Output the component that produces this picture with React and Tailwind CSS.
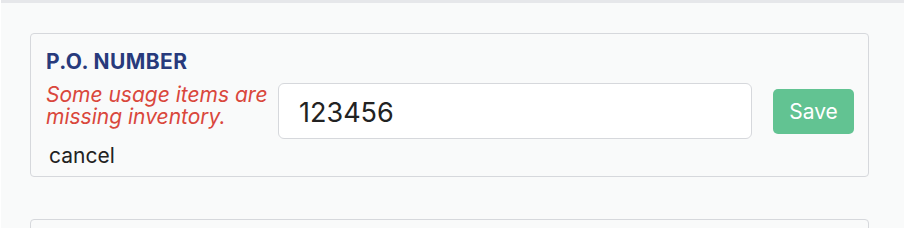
import React, { useState } from 'react';

export default function App() {
  const [po, setPo] = useState('123456');

  return (
    <div className="h-[228px] overflow-hidden bg-[#f9fafa] border-l border-white font-['Inter','Noto_Sans',sans-serif]">
      <div className="h-[3px] bg-[#e6e7ea]" />

      <div className="pl-[29px] pr-[35px] pt-[30px]">
        {/* ── P.O. number card ── */}
        <div className="border border-[#d6d8dc] rounded-[4px] pt-[16px] pb-[8px] pl-[15px] pr-[14px]">
          <div className="text-[21px] leading-[24px] font-bold tracking-[0.4px] text-[#283a7c]">
            P.O. NUMBER
          </div>

          <div className="flex items-start gap-[8px] mt-[9px]">
            <div className="w-[224px] shrink-0 mt-[1px] text-[21px] leading-[22px] italic text-[#d9473c] whitespace-nowrap">
              <div>Some usage items are</div>
              <div>missing inventory.</div>
            </div>

            <input
              value={po}
              onChange={(e) => setPo(e.target.value)}
              className="flex-1 min-w-0 h-[56px] bg-white border border-[#d6d8dc] rounded-[6px] px-[20px] pt-[3px] text-[27px] text-[#222] outline-none"
            />

            <button className="ml-[13px] mt-[6px] w-[81px] h-[45px] rounded-[5px] bg-[#62c392] text-white text-[21px] shrink-0">
              Save
            </button>
          </div>

          <button className="block mt-[5px] ml-[3px] text-[21px] leading-[24px] text-[#222]">
            cancel
          </button>
        </div>

        {/* ── next card ── */}
        <div className="mt-[42px] h-[60px] border border-[#d6d8dc] rounded-[4px]" />
      </div>
    </div>
  );
}
